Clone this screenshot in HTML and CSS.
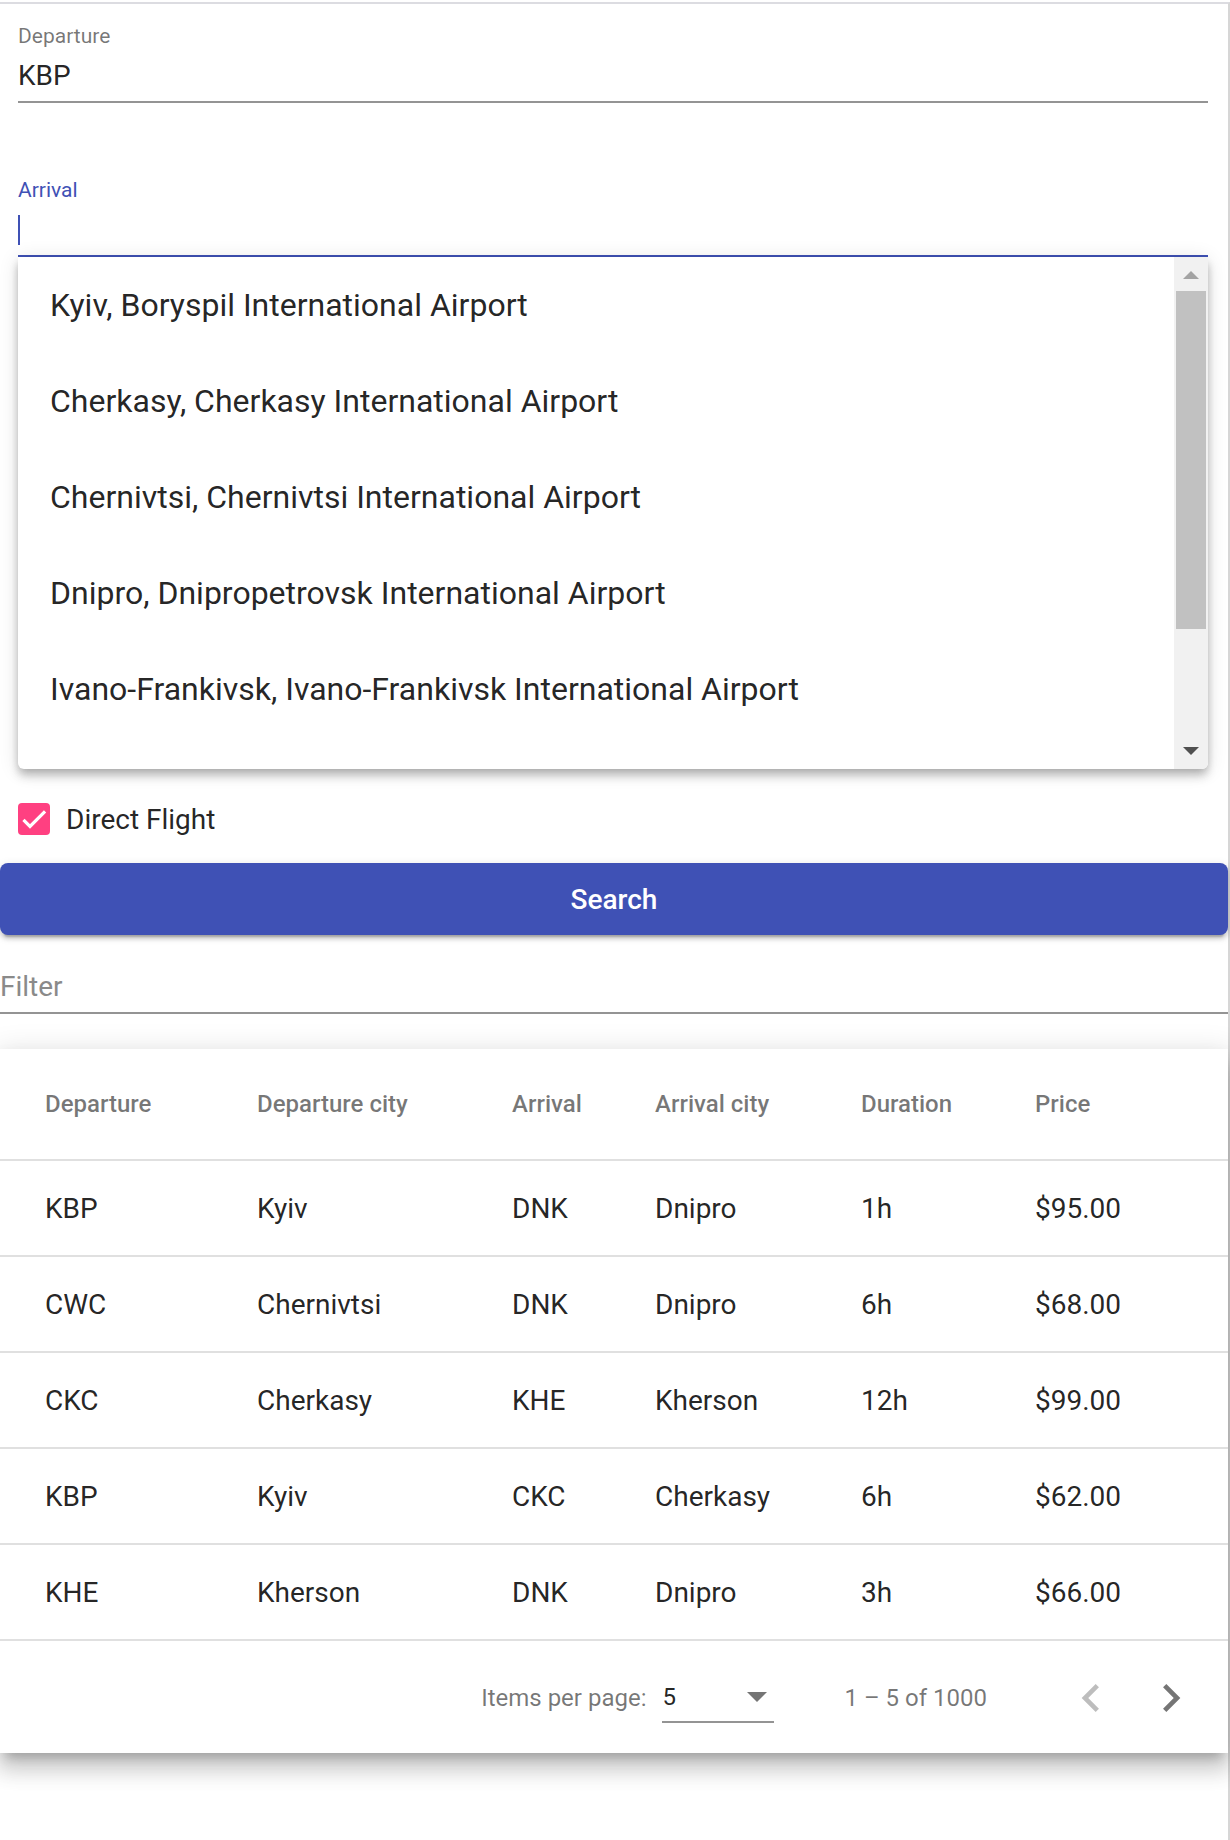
FILE: index.html
```html
<!DOCTYPE html>
<html lang="en">
<head>
<meta charset="utf-8">
<title>Flight search</title>
<link rel="stylesheet" href="styles.css">
</head>
<body>
<div class="page">
  <div class="fields">
    <div class="field">
      <label class="field-label">Departure</label>
      <div class="field-control"><div class="field-input">KBP</div></div>
    </div>
    <div class="field field-focused">
      <label class="field-label">Arrival</label>
      <div class="field-control"><div class="field-input"><span class="caret"></span></div></div>
    </div>
    <div class="ac-panel">
      <ul class="ac-options">
        <li>Kyiv, Boryspil International Airport</li>
        <li>Cherkasy, Cherkasy International Airport</li>
        <li>Chernivtsi, Chernivtsi International Airport</li>
        <li>Dnipro, Dnipropetrovsk International Airport</li>
        <li>Ivano-Frankivsk, Ivano-Frankivsk International Airport</li>
      </ul>
      <div class="ac-scrollbar">
        <span class="sb-up"></span>
        <span class="sb-thumb"></span>
        <span class="sb-space"></span>
        <span class="sb-down"></span>
      </div>
    </div>
    <label class="checkbox">
      <span class="checkbox-box">
        <svg viewBox="0 0 24 24" width="32" height="32"><path d="M4.1 12.7 9 17.6 20.3 6.3" fill="none" stroke="#fff" stroke-width="2.4"/></svg>
      </span>
      <span class="checkbox-label">Direct Flight</span>
    </label>
  </div>

  <button class="search-btn" type="button">Search</button>

  <div class="filter">
    <input class="filter-input" type="text" placeholder="Filter">
  </div>

  <div class="card">
    <div class="trow thead">
      <div>Departure</div><div>Departure city</div><div>Arrival</div><div>Arrival city</div><div>Duration</div><div>Price</div>
    </div>
    <div class="trow">
      <div>KBP</div><div>Kyiv</div><div>DNK</div><div>Dnipro</div><div>1h</div><div>$95.00</div>
    </div>
    <div class="trow">
      <div>CWC</div><div>Chernivtsi</div><div>DNK</div><div>Dnipro</div><div>6h</div><div>$68.00</div>
    </div>
    <div class="trow">
      <div>CKC</div><div>Cherkasy</div><div>KHE</div><div>Kherson</div><div>12h</div><div>$99.00</div>
    </div>
    <div class="trow">
      <div>KBP</div><div>Kyiv</div><div>CKC</div><div>Cherkasy</div><div>6h</div><div>$62.00</div>
    </div>
    <div class="trow">
      <div>KHE</div><div>Kherson</div><div>DNK</div><div>Dnipro</div><div>3h</div><div>$66.00</div>
    </div>
    <div class="paginator">
      <span class="pg-label">Items per page:</span>
      <span class="pg-select"><span class="pg-value">5</span><span class="pg-arrow"></span></span>
      <span class="pg-range">1 – 5 of 1000</span>
      <span class="pg-btn pg-prev">
        <svg viewBox="0 0 24 24" width="56" height="56"><path d="M15.41 7.41 14 6l-6 6 6 6 1.41-1.41L10.83 12z" fill="currentColor"/></svg>
      </span>
      <span class="pg-btn pg-next">
        <svg viewBox="0 0 24 24" width="56" height="56"><path d="M10 6 8.59 7.41 13.17 12l-4.58 4.59L10 18l6-6z" fill="currentColor"/></svg>
      </span>
    </div>
  </div>
</div>
</body>
</html>
```
FILE: styles.css
```css
* { box-sizing: border-box; }
html, body { margin: 0; padding: 0; background: #fff; }
body {
  font-family: Roboto, "Noto Sans", "Liberation Sans", sans-serif;
  color: rgba(0, 0, 0, 0.87);
}
.page {
  margin-top: 2px;
  width: 1230px;
  min-height: 1838px;
  border-top: 2px solid #dcdce1;
  border-right: 2px solid #d6d6d6;
}

/* form fields */
.fields { padding: 20px 20px 0 18px; }
.field-label {
  display: block;
  font-size: 21px;
  line-height: 24px;
  color: rgba(0, 0, 0, 0.54);
}
.field-control {
  margin-top: 12px;
  padding-bottom: 9px;
  border-bottom: 2px solid #949494;
}
.field-input {
  display: flex;
  align-items: center;
  height: 32px;
  font-size: 28px;
  line-height: 32px;
  color: rgba(0, 0, 0, 0.87);
}
.field + .field { margin-top: 75px; }
.field-focused .field-label { color: #3f51b5; }
.field-focused .field-control { border-bottom-color: #3f51b5; }
.caret { width: 2px; height: 30px; background: #3f51b5; }

/* autocomplete panel */
.ac-panel {
  display: flex;
  height: 512px;
  background: #fff;
  border-radius: 0 0 6px 6px;
  overflow: hidden;
  box-shadow: 0 4px 8px -2px rgba(0, 0, 0, 0.2), 0 8px 10px 0 rgba(0, 0, 0, 0.14), 0 2px 20px 0 rgba(0, 0, 0, 0.12);
}
.ac-options {
  flex: 1;
  margin: 0;
  padding: 0;
  list-style: none;
  overflow: hidden;
}
.ac-options li {
  height: 96px;
  line-height: 96px;
  padding-left: 32px;
  font-size: 32px;
  white-space: nowrap;
  color: rgba(0, 0, 0, 0.87);
}
.ac-scrollbar {
  width: 34px;
  background: #f1f1f1;
  display: flex;
  flex-direction: column;
  align-items: center;
  padding: 14px 0;
}
.sb-up {
  width: 0; height: 0;
  border-left: 8px solid transparent;
  border-right: 8px solid transparent;
  border-bottom: 8px solid #a3a3a3;
}
.sb-thumb {
  width: 30px;
  height: 338px;
  margin-top: 12px;
  background: #c1c1c1;
}
.sb-space { flex: 1; }
.sb-down {
  width: 0; height: 0;
  border-left: 8px solid transparent;
  border-right: 8px solid transparent;
  border-top: 8px solid #505050;
}

/* checkbox */
.checkbox {
  display: flex;
  align-items: center;
  gap: 16px;
  height: 32px;
  margin-top: 34px;
  font-size: 28px;
  line-height: 32px;
}
.checkbox-label { padding-top: 2px; }
.checkbox-box {
  display: flex;
  width: 32px;
  height: 32px;
  border-radius: 4px;
  background: #ff4081;
}

/* search button */
.search-btn {
  display: block;
  width: 100%;
  height: 72px;
  margin-top: 28px;
  padding: 2px 0 0;
  border: 0;
  border-radius: 8px;
  background: #3f51b5;
  color: #fff;
  font-family: Roboto, "Noto Sans", sans-serif;
  font-size: 28px;
  font-weight: 500;
  line-height: 70px;
  box-shadow: 0 6px 2px -4px rgba(0, 0, 0, 0.2), 0 4px 4px 0 rgba(0, 0, 0, 0.14), 0 2px 10px 0 rgba(0, 0, 0, 0.12);
}

/* filter */
.filter {
  margin-top: 36px;
  padding-bottom: 9px;
  border-bottom: 2px solid #949494;
}
.filter-input {
  display: block;
  width: 100%;
  height: 32px;
  padding: 0;
  border: 0;
  outline: 0;
  background: transparent;
  font-family: Roboto, "Noto Sans", sans-serif;
  font-size: 28px;
  line-height: 32px;
  color: rgba(0, 0, 0, 0.87);
}
.filter-input::placeholder { color: #8a8a8a; }

/* table card */
.card {
  margin-top: 35px;
  background: #fff;
  box-shadow: 0 10px 10px -6px rgba(0, 0, 0, 0.2), 0 16px 20px 2px rgba(0, 0, 0, 0.14), 0 6px 28px 4px rgba(0, 0, 0, 0.12);
}
.trow {
  display: grid;
  grid-template-columns: 212px 255px 143px 206px 174px 1fr;
  align-items: center;
  height: 96px;
  padding-left: 45px;
  border-bottom: 2px solid #e0e0e0;
  font-size: 28px;
  color: rgba(0, 0, 0, 0.87);
}
.thead {
  height: 112px;
  font-size: 24px;
  font-weight: 500;
  color: rgba(0, 0, 0, 0.54);
}

/* paginator */
.paginator {
  display: flex;
  justify-content: flex-end;
  align-items: center;
  height: 112px;
  padding: 2px 17px 0 0;
  font-size: 24px;
  color: rgba(0, 0, 0, 0.54);
}
.pg-label { margin-right: 16px; }
.pg-select {
  display: flex;
  align-items: center;
  justify-content: space-between;
  width: 112px;
  height: 46px;
  margin-top: 4px;
  padding: 0 7px 4px 0;
  border-bottom: 2px solid #949494;
  color: rgba(0, 0, 0, 0.87);
}
.pg-arrow {
  width: 0; height: 0;
  border-left: 10px solid transparent;
  border-right: 10px solid transparent;
  border-top: 10px solid #757575;
}
.pg-range { margin-left: 70px; margin-right: 64px; }
.pg-btn {
  display: flex;
  align-items: center;
  justify-content: center;
  width: 80px;
  height: 80px;
}
.pg-prev { color: rgba(0, 0, 0, 0.26); }
.pg-next { color: rgba(0, 0, 0, 0.54); }
```
